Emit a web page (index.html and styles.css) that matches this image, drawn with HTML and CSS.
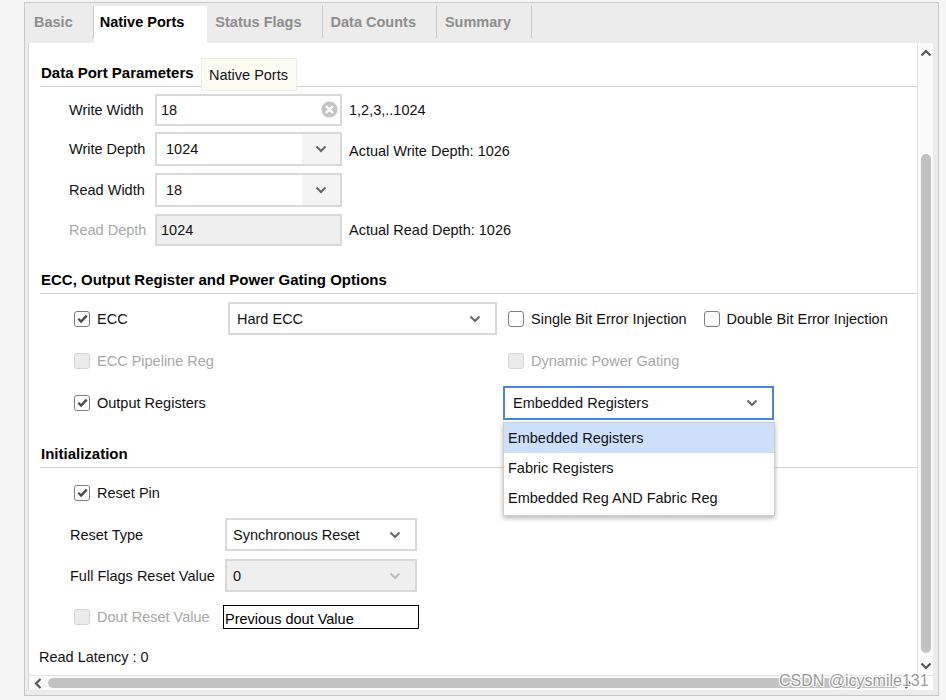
FILE: index.html
```html
<!DOCTYPE html>
<html>
<head>
<meta charset="utf-8">
<title>Native Ports</title>
<link rel="stylesheet" href="styles.css">
</head>
<body>
<div class="frame">
  <div class="tabs">
    <div class="tab first">Basic</div>
    <div class="tab active">Native Ports</div>
    <div class="tab">Status Flags</div>
    <div class="tab">Data Counts</div>
    <div class="tab">Summary</div>
  </div>
  <div class="panel">
    <div class="viewport">
      <div class="content">
        <div class="sec-head">Data Port Parameters<div class="tooltip">Native Ports</div></div>
        <div class="prows">
          <div class="prow r1">
            <span class="plabel">Write Width</span>
            <div class="field ftext">18<span class="clear"><svg width="17" height="17" viewBox="0 0 17 17"><circle cx="8.5" cy="8.5" r="8" fill="#c4c4c4"/><path d="M5.6 5.6 L11.4 11.4 M11.4 5.6 L5.6 11.4" stroke="#fff" stroke-width="2.2" stroke-linecap="round"/></svg></span></div>
            <span class="hint">1,2,3,..1024</span>
          </div>
          <div class="prow r2">
            <span class="plabel">Write Depth</span>
            <div class="field fsel">1024<span class="chev zone"><svg width="12" height="8" viewBox="0 0 12 8"><path d="M1.5 1.5 L6 6 L10.5 1.5" fill="none" stroke="#666" stroke-width="2"/></svg></span></div>
            <span class="hint low">Actual Write Depth: 1026</span>
          </div>
          <div class="prow r3">
            <span class="plabel">Read Width</span>
            <div class="field fsel">18<span class="chev zone"><svg width="12" height="8" viewBox="0 0 12 8"><path d="M1.5 1.5 L6 6 L10.5 1.5" fill="none" stroke="#666" stroke-width="2"/></svg></span></div>
          </div>
          <div class="prow r4">
            <span class="plabel dis">Read Depth</span>
            <div class="field ftext disabled">1024</div>
            <span class="hint">Actual Read Depth: 1026</span>
          </div>
        </div>

        <div class="sec-head s2">ECC, Output Register and Power Gating Options</div>
        <div class="grid">
          <label class="chk"><span class="cb"><svg width="13" height="13" viewBox="0 0 13 13"><path d="M2.3 6.8 L5.1 9.6 L10.7 3.6" fill="none" stroke="#4a4a4a" stroke-width="2.3"/></svg></span>ECC</label>
          <div class="field gsel">Hard ECC<span class="chev"><svg width="12" height="8" viewBox="0 0 12 8"><path d="M1.5 1.5 L6 6 L10.5 1.5" fill="none" stroke="#666" stroke-width="2"/></svg></span></div>
          <div class="col3">
            <label class="chk"><span class="cb"></span>Single Bit Error Injection</label>
            <label class="chk"><span class="cb"></span>Double Bit Error Injection</label>
          </div>

          <label class="chk dis"><span class="cb"></span>ECC Pipeline Reg</label>
          <div></div>
          <div class="col3">
            <label class="chk dis"><span class="cb"></span>Dynamic Power Gating</label>
          </div>

          <label class="chk"><span class="cb"><svg width="13" height="13" viewBox="0 0 13 13"><path d="M2.3 6.8 L5.1 9.6 L10.7 3.6" fill="none" stroke="#4a4a4a" stroke-width="2.3"/></svg></span>Output Registers</label>
          <div></div>
          <div class="col3 nopad">
            <div class="field osel">Embedded Registers<span class="chev"><svg width="12" height="8" viewBox="0 0 12 8"><path d="M1.5 1.5 L6 6 L10.5 1.5" fill="none" stroke="#666" stroke-width="2"/></svg></span>
              <ul class="menu">
                <li class="sel">Embedded Registers</li>
                <li>Fabric Registers</li>
                <li>Embedded Reg AND Fabric Reg</li>
              </ul>
            </div>
          </div>
        </div>

        <div class="sec-head s3">Initialization</div>
        <div class="irows">
          <label class="chk irow-pin"><span class="cb"><svg width="13" height="13" viewBox="0 0 13 13"><path d="M2.3 6.8 L5.1 9.6 L10.7 3.6" fill="none" stroke="#4a4a4a" stroke-width="2.3"/></svg></span>Reset Pin</label>
          <div class="irow">
            <span class="ilabel">Reset Type</span>
            <div class="field isel">Synchronous Reset<span class="chev"><svg width="12" height="8" viewBox="0 0 12 8"><path d="M1.5 1.5 L6 6 L10.5 1.5" fill="none" stroke="#666" stroke-width="2"/></svg></span></div>
          </div>
          <div class="irow">
            <span class="ilabel">Full Flags Reset Value</span>
            <div class="field isel disabled">0<span class="chev"><svg width="12" height="8" viewBox="0 0 12 8"><path d="M1.5 1.5 L6 6 L10.5 1.5" fill="none" stroke="#bdbdbd" stroke-width="2"/></svg></span></div>
          </div>
          <div class="irow dout">
            <label class="chk dis doutlabel"><span class="cb"></span>Dout Reset Value</label>
            <div class="plain">Previous dout Value</div>
          </div>
        </div>
        <div class="latency">Read Latency : 0</div>
      </div>
      <div class="vscroll">
        <div class="varrow up"><svg width="12" height="8" viewBox="0 0 12 8"><path d="M1.5 1.5 L6 6 L10.5 1.5" fill="none" stroke="#555" stroke-width="2.2"/></svg></div>
        <div class="vthumb"></div>
        <div class="varrow down"><svg width="12" height="8" viewBox="0 0 12 8"><path d="M1.5 1.5 L6 6 L10.5 1.5" fill="none" stroke="#555" stroke-width="2.2"/></svg></div>
      </div>
    </div>
    <div class="hscroll">
      <span class="harrow left"><svg width="8" height="11" viewBox="0 0 8 11"><path d="M6.5 1 L2 5.5 L6.5 10" fill="none" stroke="#555" stroke-width="2.2"/></svg></span>
      <div class="hthumb"></div>
      <span class="harrow right"><svg width="8" height="11" viewBox="0 0 8 11"><path d="M1.5 1 L6 5.5 L1.5 10" fill="none" stroke="#555" stroke-width="2.2"/></svg></span>
      <div class="corner"></div>
    </div>
  </div>
</div>
<div class="watermark">CSDN @icysmile131</div>
</body>
</html>
```

FILE: styles.css
```css
* { box-sizing: border-box; }

body {
  margin: 0;
  background: #f5f5f5;
  font-family: "Liberation Sans", Arial, sans-serif;
  font-size: 14.5px;
  color: #111;
  position: relative;
  height: 700px;
  overflow: hidden;
}

.frame {
  margin: 2px 0 0 24px;
  width: 915px;
  height: 694px;
  border: 1px solid #c8c8c8;
  background: #ececec;
  padding: 0 5px 5px 3px;
}

/* tabs */
.tabs {
  display: flex;
  align-items: flex-start;
  height: 40px;
}
.tab {
  margin-top: 3px;
  height: 32px;
  line-height: 32px;
  padding: 0 20px 0 8px;
  border-right: 1px solid #c9c9c9;
  font-weight: bold;
  color: #8d8d8d;
  white-space: nowrap;
}
.tab.first { padding-left: 6px; }
.tab.active {
  background: #fff;
  color: #000;
  height: 37px;
  border-right: none;
  padding-left: 6px;
  padding-right: 23px;
}

/* panel */
.panel {
  height: 647px;
  border-left: 1px solid #d6d6d6;
  background: #fff;
  display: flex;
  flex-direction: column;
}
.viewport {
  display: flex;
  height: 632px;
}
.content {
  flex: 1;
  position: relative;
  padding-top: 20px;
  overflow: visible;
}

.sec-head {
  position: relative;
  margin-left: 11px;
  padding-left: 1px;
  height: 24px;
  line-height: 20px;
  padding-bottom: 3px;
  border-bottom: 1px solid #d2d2d2;
  font-weight: bold;
  font-size: 15px;
  color: #000;
}
.sec-head.s2 { margin-top: 24px; }
.sec-head.s3 { margin-top: 25px; }

.tooltip {
  position: absolute;
  left: 161px;
  top: -5px;
  width: 96px;
  height: 33px;
  background: #fcfcf5;
  border: 1px solid #efefe6;
  font-weight: normal;
  font-size: 14.5px;
  color: #111;
  padding-left: 7px;
  display: flex;
  align-items: center;
}

/* section 1 */
.prows {
  padding: 7px 0 0 40px;
  display: flex;
  flex-direction: column;
}
.prow {
  display: flex;
  align-items: center;
}
.prow.r1 { height: 32px; margin-bottom: 6px; }
.prow.r2 { height: 34px; margin-bottom: 7px; }
.prow.r3 { height: 34px; margin-bottom: 7px; }
.prow.r4 { height: 32px; }

.plabel {
  width: 86px;
  flex: none;
}
.dis { color: #a8a8a8; }

.field {
  position: relative;
  height: 100%;
  border: 2px solid #d9d9d9;
  background: #fff;
  display: flex;
  align-items: center;
  white-space: nowrap;
}
.prow .field { width: 187px; }
.ftext { padding-left: 4px; }
.fsel { padding-left: 9px; }
.field.disabled { background: #efefef; }

.hint { margin-left: 7px; }
.hint.low { position: relative; top: 2px; }

.clear {
  position: absolute;
  right: 2px;
  top: 50%;
  margin-top: -9px;
  display: flex;
}
.chev {
  position: absolute;
  right: 14px;
  top: 50%;
  margin-top: -4px;
  display: flex;
}
.chev.zone {
  right: 0;
  top: 0;
  margin-top: 0;
  width: 38px;
  height: 100%;
  background: #f4f4f4;
  align-items: center;
  justify-content: center;
}

/* section 2 */
.grid {
  padding: 8px 0 0 45px;
  display: grid;
  grid-template-columns: 154px 275px auto;
  grid-auto-rows: 33px;
  row-gap: 9px;
}
.chk {
  display: flex;
  align-items: center;
  gap: 7px;
  white-space: nowrap;
}
.cb {
  width: 16px;
  height: 16px;
  flex: none;
  border: 1.5px solid #7d7d7d;
  border-radius: 3px;
  background: #fff;
  display: flex;
  align-items: center;
  justify-content: center;
}
.chk.dis .cb {
  border-color: #d4d4d4;
  background: #ebebeb;
}
.gsel {
  width: 269px;
  padding-left: 7px;
}
.col3 {
  display: flex;
  align-items: center;
  gap: 17px;
  padding-left: 5px;
}
.col3.nopad { padding-left: 0; }
.osel {
  width: 271px;
  height: 34px;
  border-color: #4a85d8;
  padding-left: 8px;
}

.menu {
  position: absolute;
  left: -2px;
  top: calc(100% + 4px);
  width: 272px;
  margin: 0;
  padding: 0 0 2px;
  list-style: none;
  background: #fff;
  border: 1px solid #cfcfcf;
  box-shadow: 0 2px 5px rgba(0, 0, 0, 0.3);
  z-index: 5;
}
.menu li {
  height: 30px;
  line-height: 30px;
  padding-left: 4px;
}
.menu li.sel { background: #cce0fb; }

/* section 3 */
.irows {
  padding: 8px 0 0 41px;
  display: flex;
  flex-direction: column;
}
.irow-pin {
  height: 33px;
  margin-left: 4px;
  margin-bottom: 9px;
}
.irow {
  display: flex;
  align-items: center;
  height: 33px;
  margin-bottom: 8px;
}
.ilabel {
  width: 155px;
  flex: none;
}
.isel {
  width: 192px;
  padding-left: 6px;
}
.irow.dout {
  height: 24px;
  margin-top: 5px;
  margin-bottom: 0;
}
.doutlabel {
  width: 149px;
  margin-left: 4px;
}
.plain {
  width: 196px;
  height: 24px;
  border: 1px solid #000;
  padding-left: 1px;
  padding-top: 4px;
  line-height: 18px;
  color: #000;
  white-space: nowrap;
}

.latency {
  margin: 19px 0 0 10px;
  line-height: 18px;
}

/* scrollbars */
.vscroll {
  width: 16px;
  flex: none;
  border-left: 1px solid #e3e3e3;
  background: #fafafa;
  display: flex;
  flex-direction: column;
  align-items: center;
}
.varrow {
  flex: none;
  width: 14px;
  height: 18px;
  display: flex;
  align-items: center;
  justify-content: center;
}
.varrow.up {
  margin-top: 1px;
  transform: rotate(180deg);
}
.varrow.down {
  margin-top: 5px;
  height: 16px;
}
.vthumb {
  flex: none;
  margin-top: 92px;
  width: 10px;
  height: 499px;
  background: #c2c2c2;
  border-radius: 5px;
}

.hscroll {
  height: 15px;
  border-top: 1px solid #e3e3e3;
  background: #fafafa;
  display: flex;
  align-items: center;
}
.harrow {
  display: flex;
  margin-left: 5px;
}
.hthumb {
  margin-left: 6px;
  width: 852px;
  height: 10px;
  background: #c2c2c2;
  border-radius: 5px;
}
.harrow.right { margin-left: 4px; }
.corner {
  margin-left: auto;
  width: 16px;
  height: 100%;
  background: #fff;
}

.watermark {
  position: absolute;
  left: 779px;
  top: 672px;
  font-size: 16px;
  color: #9a9a9a;
  text-shadow: -1px -1px 0 #fff, 1px -1px 0 #fff, -1px 1px 0 #fff, 1px 1px 0 #fff;
  white-space: nowrap;
}
```
